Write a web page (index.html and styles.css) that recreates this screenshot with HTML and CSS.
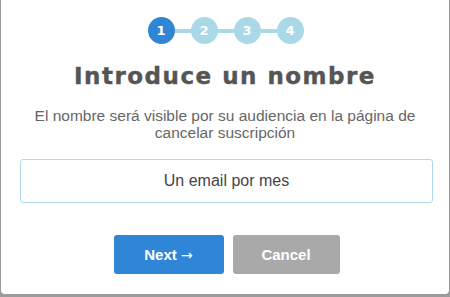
FILE: index.html
```html
<!DOCTYPE html>
<html lang="es">
<head>
<meta charset="utf-8">
<link rel="stylesheet" href="styles.css">
</head>
<body>
<div class="modal">
  <div class="steps">
    <span class="step active">1</span>
    <span class="bar"></span>
    <span class="step">2</span>
    <span class="bar"></span>
    <span class="step">3</span>
    <span class="bar"></span>
    <span class="step">4</span>
  </div>
  <h1 class="title">Introduce un nombre</h1>
  <p class="desc">El nombre será visible por su audiencia en la página de cancelar suscripción</p>
  <div class="field">Un email por mes</div>
  <div class="actions">
    <button class="btn btn-next">Next <span class="arrow">→</span></button>
    <button class="btn btn-cancel">Cancel</button>
  </div>
</div>
</body>
</html>
```
FILE: styles.css
```css
html, body {
  margin: 0;
  padding: 0;
  background: #9b9b9b;
  width: 450px;
  height: 297px;
  overflow: hidden;
}
.modal {
  margin-left: 1px;
  width: 448px;
  height: 294px;
  background: #fff;
  border-radius: 0 0 4px 4px;
  display: flex;
  flex-direction: column;
  align-items: center;
  font-family: "Liberation Sans", Arial, sans-serif;
}
.steps {
  display: flex;
  align-items: center;
  margin-top: 17px;
  margin-left: 1px;
}
.step {
  width: 27px;
  height: 27px;
  border-radius: 50%;
  background: #a9d8e6;
  color: #fff;
  font-weight: bold;
  font-size: 13px;
  display: flex;
  align-items: center;
  justify-content: center;
  font-family: "DejaVu Sans", sans-serif;
}
.step.active {
  background: #2f86d6;
}
.bar {
  width: 16px;
  height: 4px;
  background: #a9d8e6;
}
.title {
  margin: 19px 0 0;
  font-family: "DejaVu Sans", sans-serif;
  font-weight: bold;
  font-size: 23px;
  letter-spacing: 1.5px;
  -webkit-text-stroke: 0.4px #555;
  color: #555;
  line-height: 26px;
}
.desc {
  margin: 18px 0 0;
  width: 410px;
  text-align: center;
  font-size: 15.5px;
  line-height: 17px;
  color: #666;
}
.field {
  margin-top: 18px;
  width: 411px;
  height: 42px;
  border: 1px solid #b0d8ee;
  border-radius: 3px;
  display: flex;
  align-items: center;
  justify-content: center;
  font-size: 16px;
  color: #444;
  margin-left: 3px;
}
.actions {
  display: flex;
  gap: 9px;
  margin-top: 32px;
  margin-left: 3px;
}
.btn {
  border: none;
  border-radius: 3px;
  height: 39px;
  color: #fff;
  font-family: "Liberation Sans", Arial, sans-serif;
  font-weight: bold;
  font-size: 15px;
  padding: 0;
}
.arrow {
  font-family: "DejaVu Sans", sans-serif;
  font-weight: normal;
  font-size: 14px;
}
.btn-next {
  width: 110px;
  background: #2f86d6;
}
.btn-cancel {
  width: 107px;
  background: #a9a9a9;
}
```
